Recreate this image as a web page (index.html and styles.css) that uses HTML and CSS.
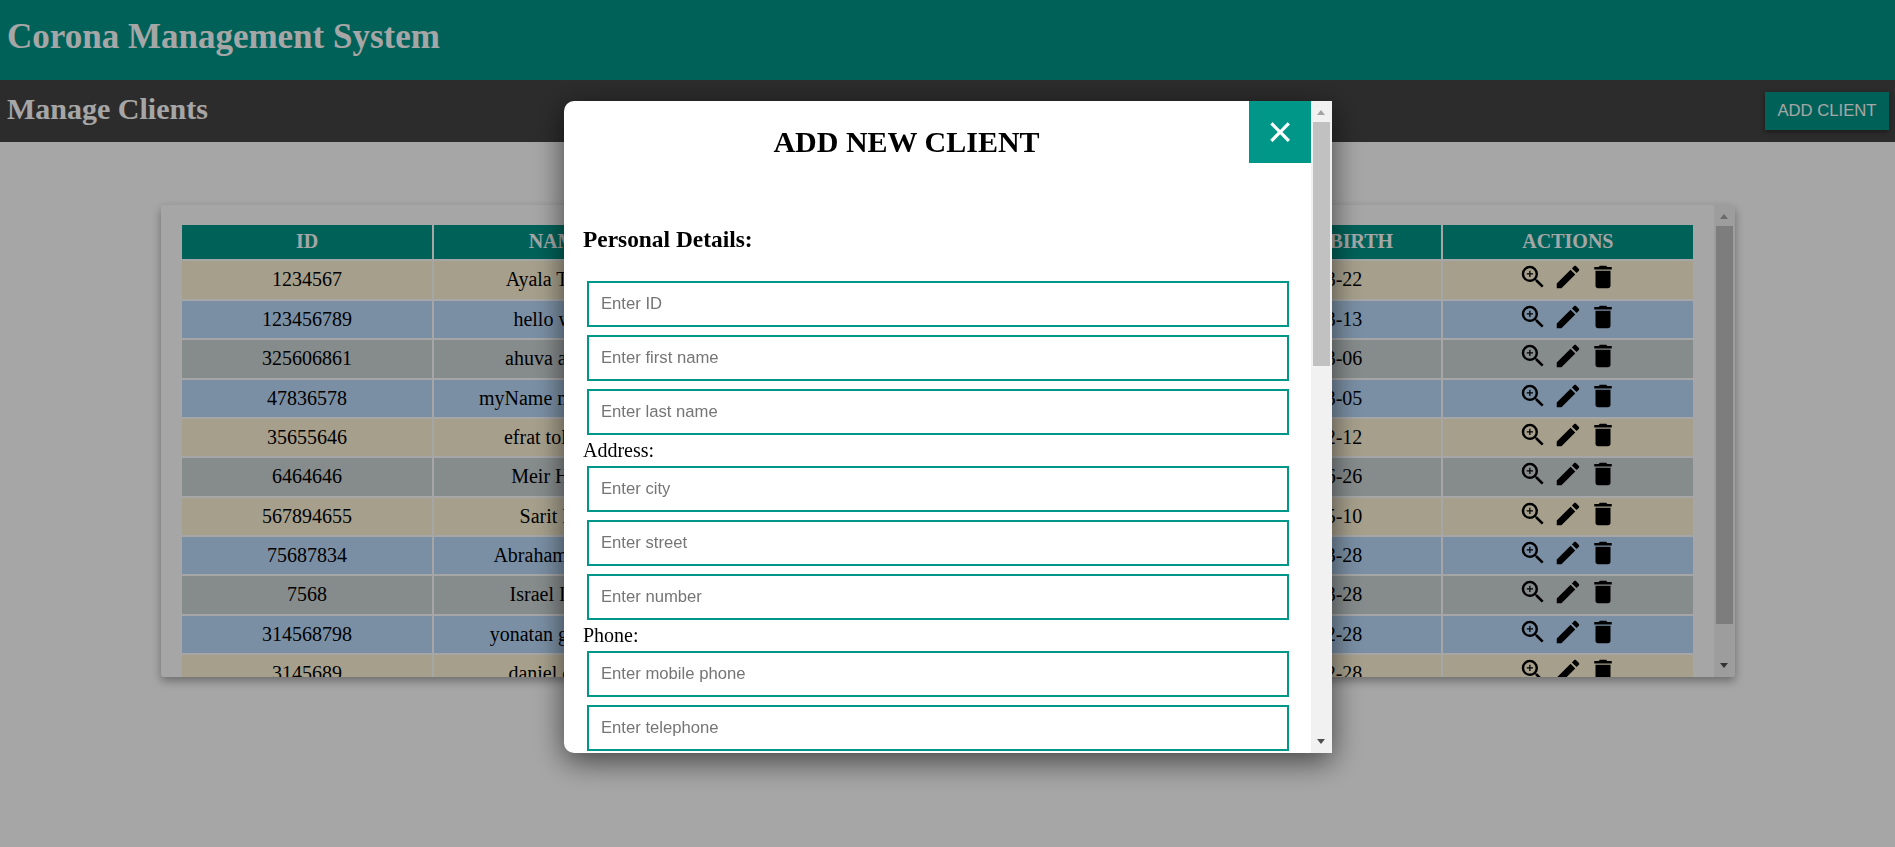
FILE: index.html
```html
<!DOCTYPE html>
<html>
  <head>
    <meta charset="utf-8">
    <meta name="viewport" content="width=device-width, initial-scale=1">
    <title>Corona Management System</title>
    <link rel="stylesheet" href="styles.css">
  </head>
  <body>
    <svg class="defs">
      <symbol id="icon-view" viewBox="0 0 24 24"><path d="M15.5 14h-.79l-.28-.27A6.47 6.47 0 0 0 16 9.5 6.5 6.5 0 1 0 9.5 16c1.61 0 3.09-.59 4.23-1.57l.27.28v.79l5 4.99L20.49 19l-4.99-5zm-6 0C7.01 14 5 11.99 5 9.5S7.01 5 9.5 5 14 7.01 14 9.5 11.99 14 9.5 14zM12 10h-2v2H9v-2H7V9h2V7h1v2h2v1z"/></symbol>
      <symbol id="icon-edit" viewBox="0 0 24 24"><path d="M3 17.25V21h3.75L17.81 9.94l-3.75-3.75L3 17.25zM20.71 7.04c.39-.39.39-1.02 0-1.41l-2.34-2.34c-.39-.39-1.02-.39-1.41 0l-1.83 1.83 3.75 3.75 1.83-1.83z"/></symbol>
      <symbol id="icon-delete" viewBox="0 0 24 24"><path d="M6 19c0 1.1.9 2 2 2h8c1.1 0 2-.9 2-2V7H6v12zM19 4h-3.5l-1-1h-5l-1 1H5v2h14V4z"/></symbol>
    </svg>

    <header class="topBar">
      <h1>Corona Management System</h1>
    </header>
    <div class="subBar">
      <h2>Manage Clients</h2>
      <button class="addButton">ADD CLIENT</button>
    </div>

    <main>
      <section class="tableCard">
        <div class="tableWrap">
          <table>
            <thead>
              <tr><th>ID</th><th>NAME</th><th>CITY</th><th>PHONE</th><th>DATE OF BIRTH</th><th>ACTIONS</th></tr>
            </thead>
            <tbody id="clients"></tbody>
          </table>
        </div>
        <div class="scrollbar">
          <span class="arrow up"></span>
          <span class="thumb cardThumb"></span>
          <span class="arrow down"></span>
        </div>
      </section>
    </main>

    <div class="overlay">
      <div class="modal">
        <div class="modalBody">
          <div class="modalHeader">
            <h2>ADD NEW CLIENT</h2>
            <button class="closeButton">&times;</button>
          </div>
          <form>
            <h3>Personal Details:</h3>
            <input type="text" placeholder="Enter ID">
            <input type="text" placeholder="Enter first name">
            <input type="text" placeholder="Enter last name">
            <label>Address:</label>
            <input type="text" placeholder="Enter city">
            <input type="text" placeholder="Enter street">
            <input type="text" placeholder="Enter number">
            <label>Phone:</label>
            <input type="text" placeholder="Enter mobile phone">
            <input type="text" placeholder="Enter telephone">
          </form>
        </div>
        <div class="scrollbar">
          <span class="arrow up"></span>
          <span class="thumb modalThumb"></span>
          <span class="arrow down"></span>
        </div>
      </div>
    </div>

    <script src="script.js"></script>
  </body>
</html>
```

FILE: styles.css
```css
* {
  box-sizing: border-box;
}
html, body {
  height: 100%;
}
body {
  margin: 0;
  overflow: hidden;
  background-color: white;
  color: black;
  font-family: "Liberation Serif", serif;
  font-size: 20px;
}
.defs {
  display: none;
}
.topBar {
  height: 80px;
  padding: 17px 7px 0;
  background-color: #009688;
  color: white;
}
.topBar h1 {
  margin: 0;
  font-size: 35px;
}
.subBar {
  display: flex;
  justify-content: space-between;
  height: 62px;
  padding: 12px 6px 0 7px;
  background-color: #444;
  color: white;
}
.subBar h2 {
  margin: 0;
  font-size: 30px;
}
.addButton {
  height: 38px;
  width: 124px;
  padding: 0;
  border: none;
  background-color: #009688;
  color: white;
  font-family: "Liberation Sans", sans-serif;
  font-size: 16.67px;
  box-shadow: 0 2px 5px rgba(0, 0, 0, 0.4);
}
main {
  padding-top: 63px;
}
.tableCard {
  display: flex;
  width: 1574px;
  height: 472px;
  margin-left: 161px;
  border-radius: 3px;
  background-color: white;
  box-shadow: 0 4px 10px rgba(0, 0, 0, 0.35);
  overflow: hidden;
}
.tableWrap {
  flex: 1;
  padding: 18px 0 0 19px;
  overflow: hidden;
}
table {
  width: 1515px;
  table-layout: fixed;
  border-collapse: separate;
  border-spacing: 2px;
  text-align: center;
}
th {
  height: 33.6px;
  padding: 0;
  background-color: #009688;
  color: white;
}
td {
  height: 37.33px;
  padding: 0;
}
tbody tr:first-child td {
  height: 38.4px;
}
.beige td {
  background-color: #fff5d7;
}
.blue td {
  background-color: #bcdcfc;
}
.gray td {
  background-color: #ced6d6;
}
td.actions {
  padding-top: 1px;
  vertical-align: top;
}
.actions svg {
  width: 30px;
  height: 30px;
  margin: 0 2.5px;
}

.scrollbar {
  display: flex;
  flex-direction: column;
  flex: none;
  width: 21px;
  padding: 0 2px;
  background-color: #f1f1f1;
}
.arrow {
  position: relative;
  flex: none;
  height: 21px;
}
.arrow::after {
  content: "";
  position: absolute;
  left: 4px;
  border-left: 4.5px solid transparent;
  border-right: 4.5px solid transparent;
}
.arrow.up::after {
  top: 9px;
  border-bottom: 5px solid #a3a3a3;
}
.arrow.down::after {
  top: 7px;
  border-top: 5px solid #505050;
}
.thumb {
  display: block;
  background-color: #c1c1c1;
}
.cardThumb {
  height: 398px;
}
.modalThumb {
  height: 244px;
}
.scrollbar .thumb + .arrow {
  margin-top: auto;
}

.overlay {
  position: fixed;
  inset: 0;
  background-color: rgba(0, 0, 0, 0.35);
}
.modal {
  position: absolute;
  left: 564px;
  top: 101px;
  display: flex;
  width: 768px;
  height: 652px;
  border-radius: 10px 0 0 10px;
  background-color: white;
  box-shadow: 0 8px 30px rgba(0, 0, 0, 0.6);
}
.modalBody {
  flex: 1;
  overflow: hidden;
  border-radius: 10px 0 0 10px;
}
.modalHeader {
  display: flex;
}
.modalHeader h2 {
  flex: 1;
  margin: 0;
  padding-top: 24px;
  text-align: center;
  font-size: 30px;
}
.closeButton {
  width: 62px;
  height: 62px;
  padding: 0;
  border: none;
  background-color: #009688;
  color: white;
  font-family: "Liberation Sans", sans-serif;
  font-size: 44px;
  font-weight: normal;
  line-height: 1;
}
form {
  padding: 0 22px 0 19px;
}
form h3 {
  margin: 0;
  padding: 63px 0 28px;
  font-size: 23.4px;
}
form label {
  display: block;
  height: 27px;
  margin-top: -4px;
}
form input {
  display: block;
  width: 702px;
  height: 46px;
  margin: 0 0 8px 4px;
  padding: 0 12px;
  border: 2px solid #009688;
  border-radius: 0;
  font-family: "Liberation Sans", sans-serif;
  font-size: 16.67px;
}
```

FILE: script.js
```js
const clients = [
  ['1234567', 'Ayala Tamari', 'Haifa', '0501234567', '1988-03-22', 'beige'],
  ['123456789', 'hello world', 'Haifa', '0521234567', '1990-03-13', 'blue'],
  ['325606861', 'ahuva amrani', 'Jerusalem', '0541234567', '1995-03-06', 'gray'],
  ['47836578', 'myName myFamily', 'Ashdod', '0531234567', '1979-03-05', 'blue'],
  ['35655646', 'efrat toledano', 'Haifa', '0581234567', '1984-02-12', 'beige'],
  ['6464646', 'Meir Hadad', 'Netanya', '0501112222', '1972-06-26', 'gray'],
  ['567894655', 'Sarit Levi', 'Bnei Brak', '0523334444', '1991-05-10', 'beige'],
  ['75687834', 'Abraham Cohen', 'Ashdod', '0545556666', '1966-03-28', 'blue'],
  ['7568', 'Israel Israeli', 'Jerusalem', '0537778888', '1970-03-28', 'gray'],
  ['314568798', 'yonatan goldberg', 'Haifa', '0589990000', '1993-02-28', 'blue'],
  ['3145689', 'daniel cohan', 'Netanya', '0501230000', '1993-02-28', 'beige']
];

const icon = name => `<svg><use href="#icon-${name}"></use></svg>`;

document.getElementById('clients').innerHTML = clients.map(c => `
  <tr class="${c[5]}">
    <td>${c[0]}</td><td>${c[1]}</td><td>${c[2]}</td><td>${c[3]}</td><td>${c[4]}</td>
    <td class="actions">${icon('view')}${icon('edit')}${icon('delete')}</td>
  </tr>`).join('');
```
